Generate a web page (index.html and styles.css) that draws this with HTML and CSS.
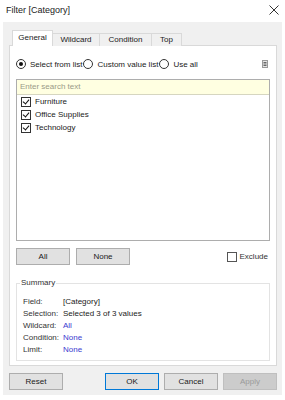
FILE: index.html
```html
<!DOCTYPE html>
<html lang="en">
<head>
    <meta charset="UTF-8">
    <title>Filter [Category]</title>
    <link rel="stylesheet" href="styles.css">
</head>
<body>
    <div class="window">
        <div class="titlebar">
            <span class="title">Filter [Category]</span>
            <svg class="close" width="10" height="10" viewBox="0 0 10 10">
                <path d="M0.5 0.5 L9.5 9.5 M9.5 0.5 L0.5 9.5" stroke="#333" stroke-width="1" fill="none"/>
            </svg>
        </div>
        <div class="client">
            <div class="tabs">
                <div class="tab active tab-general">General</div>
                <div class="tab tab-wildcard">Wildcard</div>
                <div class="tab tab-condition">Condition</div>
                <div class="tab tab-top">Top</div>
            </div>
            <div class="panel">
                <div class="mode-row">
                    <label class="radio"><span class="radio-dot checked"></span>Select from list</label>
                    <label class="radio"><span class="radio-dot"></span>Custom value list</label>
                    <label class="radio"><span class="radio-dot"></span>Use all</label>
                    <svg class="menu-icon" width="6" height="8" viewBox="0 0 6 8">
                        <rect x="0.5" y="0.5" width="5" height="7" fill="#e6e6e6" stroke="#9a9a9a"/>
                        <path d="M1.5 2.5 H4.5 M1.5 4 H4.5 M1.5 5.5 H4.5" stroke="#666" stroke-width="1"/>
                    </svg>
                </div>
                <div class="listbox">
                    <div class="search">Enter search text</div>
                    <div class="item"><span class="check checked"></span>Furniture</div>
                    <div class="item"><span class="check checked"></span>Office Supplies</div>
                    <div class="item"><span class="check checked"></span>Technology</div>
                </div>
                <div class="list-actions">
                    <button class="btn">All</button>
                    <button class="btn">None</button>
                    <label class="exclude"><span class="check"></span>Exclude</label>
                </div>
                <fieldset class="summary">
                    <legend>Summary</legend>
                    <div class="summary-grid">
                        <span class="key">Field:</span><span>[Category]</span>
                        <span class="key">Selection:</span><span>Selected 3 of 3 values</span>
                        <span class="key">Wildcard:</span><span class="link">All</span>
                        <span class="key">Condition:</span><span class="link">None</span>
                        <span class="key">Limit:</span><span class="link">None</span>
                    </div>
                </fieldset>
            </div>
            <div class="footer-buttons">
                <button class="btn">Reset</button>
                <div class="right-buttons">
                    <button class="btn ok">OK</button>
                    <button class="btn">Cancel</button>
                    <button class="btn disabled">Apply</button>
                </div>
            </div>
        </div>
    </div>
</body>
</html>
```

FILE: styles.css
```css
body {
    margin: 0;
    padding: 0;
    background-color: #fff;
    font-family: "Liberation Sans", Arial, sans-serif;
    font-size: 8px;
    color: #1a1a1a;
}
.window {
    width: 285px;
    height: 400px;
}
.titlebar {
    height: 22px;
    display: flex;
    align-items: center;
    padding: 0 6px 2px 6px;
    box-sizing: border-box;
}
.title {
    font-size: 9px;
    color: #222;
}
.close {
    margin-left: auto;
    margin-right: 0;
}
.client {
    margin-left: 3px;
    width: 279px;
    height: 373px;
    background-color: #f0f0f0;
    padding-top: 8px;
    box-sizing: border-box;
}
.tabs {
    display: flex;
    align-items: flex-end;
    margin-left: 9px;
    margin-bottom: -1px;
}
.tab {
    height: 13px;
    line-height: 12px;
    text-align: center;
    border: 1px solid #d9d9d9;
    border-bottom: none;
    border-left: none;
    box-sizing: border-box;
    background-color: #f0f0f0;
}
.tab.active {
    height: 16px;
    line-height: 14px;
    background-color: #fff;
    border-left: 1px solid #d9d9d9;
    position: relative;
    z-index: 1;
}
.tab-general { width: 41px; }
.tab-wildcard { width: 47px; }
.tab-condition { width: 52px; }
.tab-top { width: 30px; }
.panel {
    margin-left: 6px;
    width: 268px;
    height: 321px;
    background-color: #fff;
    border: 1px solid #d9d9d9;
    box-sizing: border-box;
}
.mode-row {
    display: flex;
    align-items: center;
    height: 12px;
    margin-top: 12px;
    padding-left: 6px;
}
.radio {
    display: flex;
    align-items: center;
    margin-right: 1px;
}
.radio-dot {
    width: 10px;
    height: 10px;
    border: 1px solid #333;
    border-radius: 50%;
    box-sizing: border-box;
    margin-right: 4px;
    display: flex;
    align-items: center;
    justify-content: center;
}
.radio-dot.checked::after {
    content: "";
    width: 4px;
    height: 4px;
    border-radius: 50%;
    background-color: #111;
}
.menu-icon {
    margin-left: auto;
    margin-right: 8px;
}
.listbox {
    margin: 9px 6px 0 6px;
    height: 162px;
    border: 1px solid #adadad;
    box-sizing: border-box;
}
.search {
    height: 15px;
    line-height: 14px;
    padding-left: 3px;
    background-color: #ffffe1;
    border-bottom: 1px solid #d6d6c0;
    box-sizing: border-box;
    color: #9a9a88;
}
.item {
    height: 13px;
    display: flex;
    align-items: center;
    padding-left: 4px;
}
.check {
    width: 10px;
    height: 10px;
    border: 1px solid #333;
    box-sizing: border-box;
    margin-right: 4px;
    background-color: #fff;
    position: relative;
}
.check.checked::after {
    content: "";
    position: absolute;
    left: 2px;
    top: 0px;
    width: 3px;
    height: 5px;
    border-right: 1.5px solid #111;
    border-bottom: 1.5px solid #111;
    transform: rotate(40deg);
}
.list-actions {
    display: flex;
    align-items: center;
    margin: 7px 8px 0 6px;
    gap: 6px;
}
.btn {
    width: 54px;
    height: 17px;
    padding: 0;
    font-family: "Liberation Sans", Arial, sans-serif;
    font-size: 8px;
    color: #1a1a1a;
    background-color: #e1e1e1;
    border: 1px solid #adadad;
}
.btn.ok {
    border-color: #0078d7;
}
.btn.disabled {
    background-color: #cccccc;
    border-color: #bfbfbf;
    color: #9a9a9a;
}
.exclude {
    margin-left: auto;
    display: flex;
    align-items: center;
    color: #333;
}
.exclude .check {
    border-color: #555;
    margin-right: 3px;
}
.summary {
    margin: 13px 6px 0 6px;
    padding: 7px 6px 5px 6px;
    border: 1px solid #e3e3e3;
}
.summary legend {
    padding: 0 1px;
    margin-left: -3px;
    line-height: 10px;
    color: #333;
}
.summary-grid {
    display: grid;
    grid-template-columns: 40px auto;
    grid-auto-rows: 12px;
    align-items: center;
}
.key {
    color: #333;
}
.link {
    color: #3b3bd0;
}
.footer-buttons {
    display: flex;
    margin: 7px 5px 0 6px;
}
.right-buttons {
    margin-left: auto;
    display: flex;
    gap: 5px;
}
```
